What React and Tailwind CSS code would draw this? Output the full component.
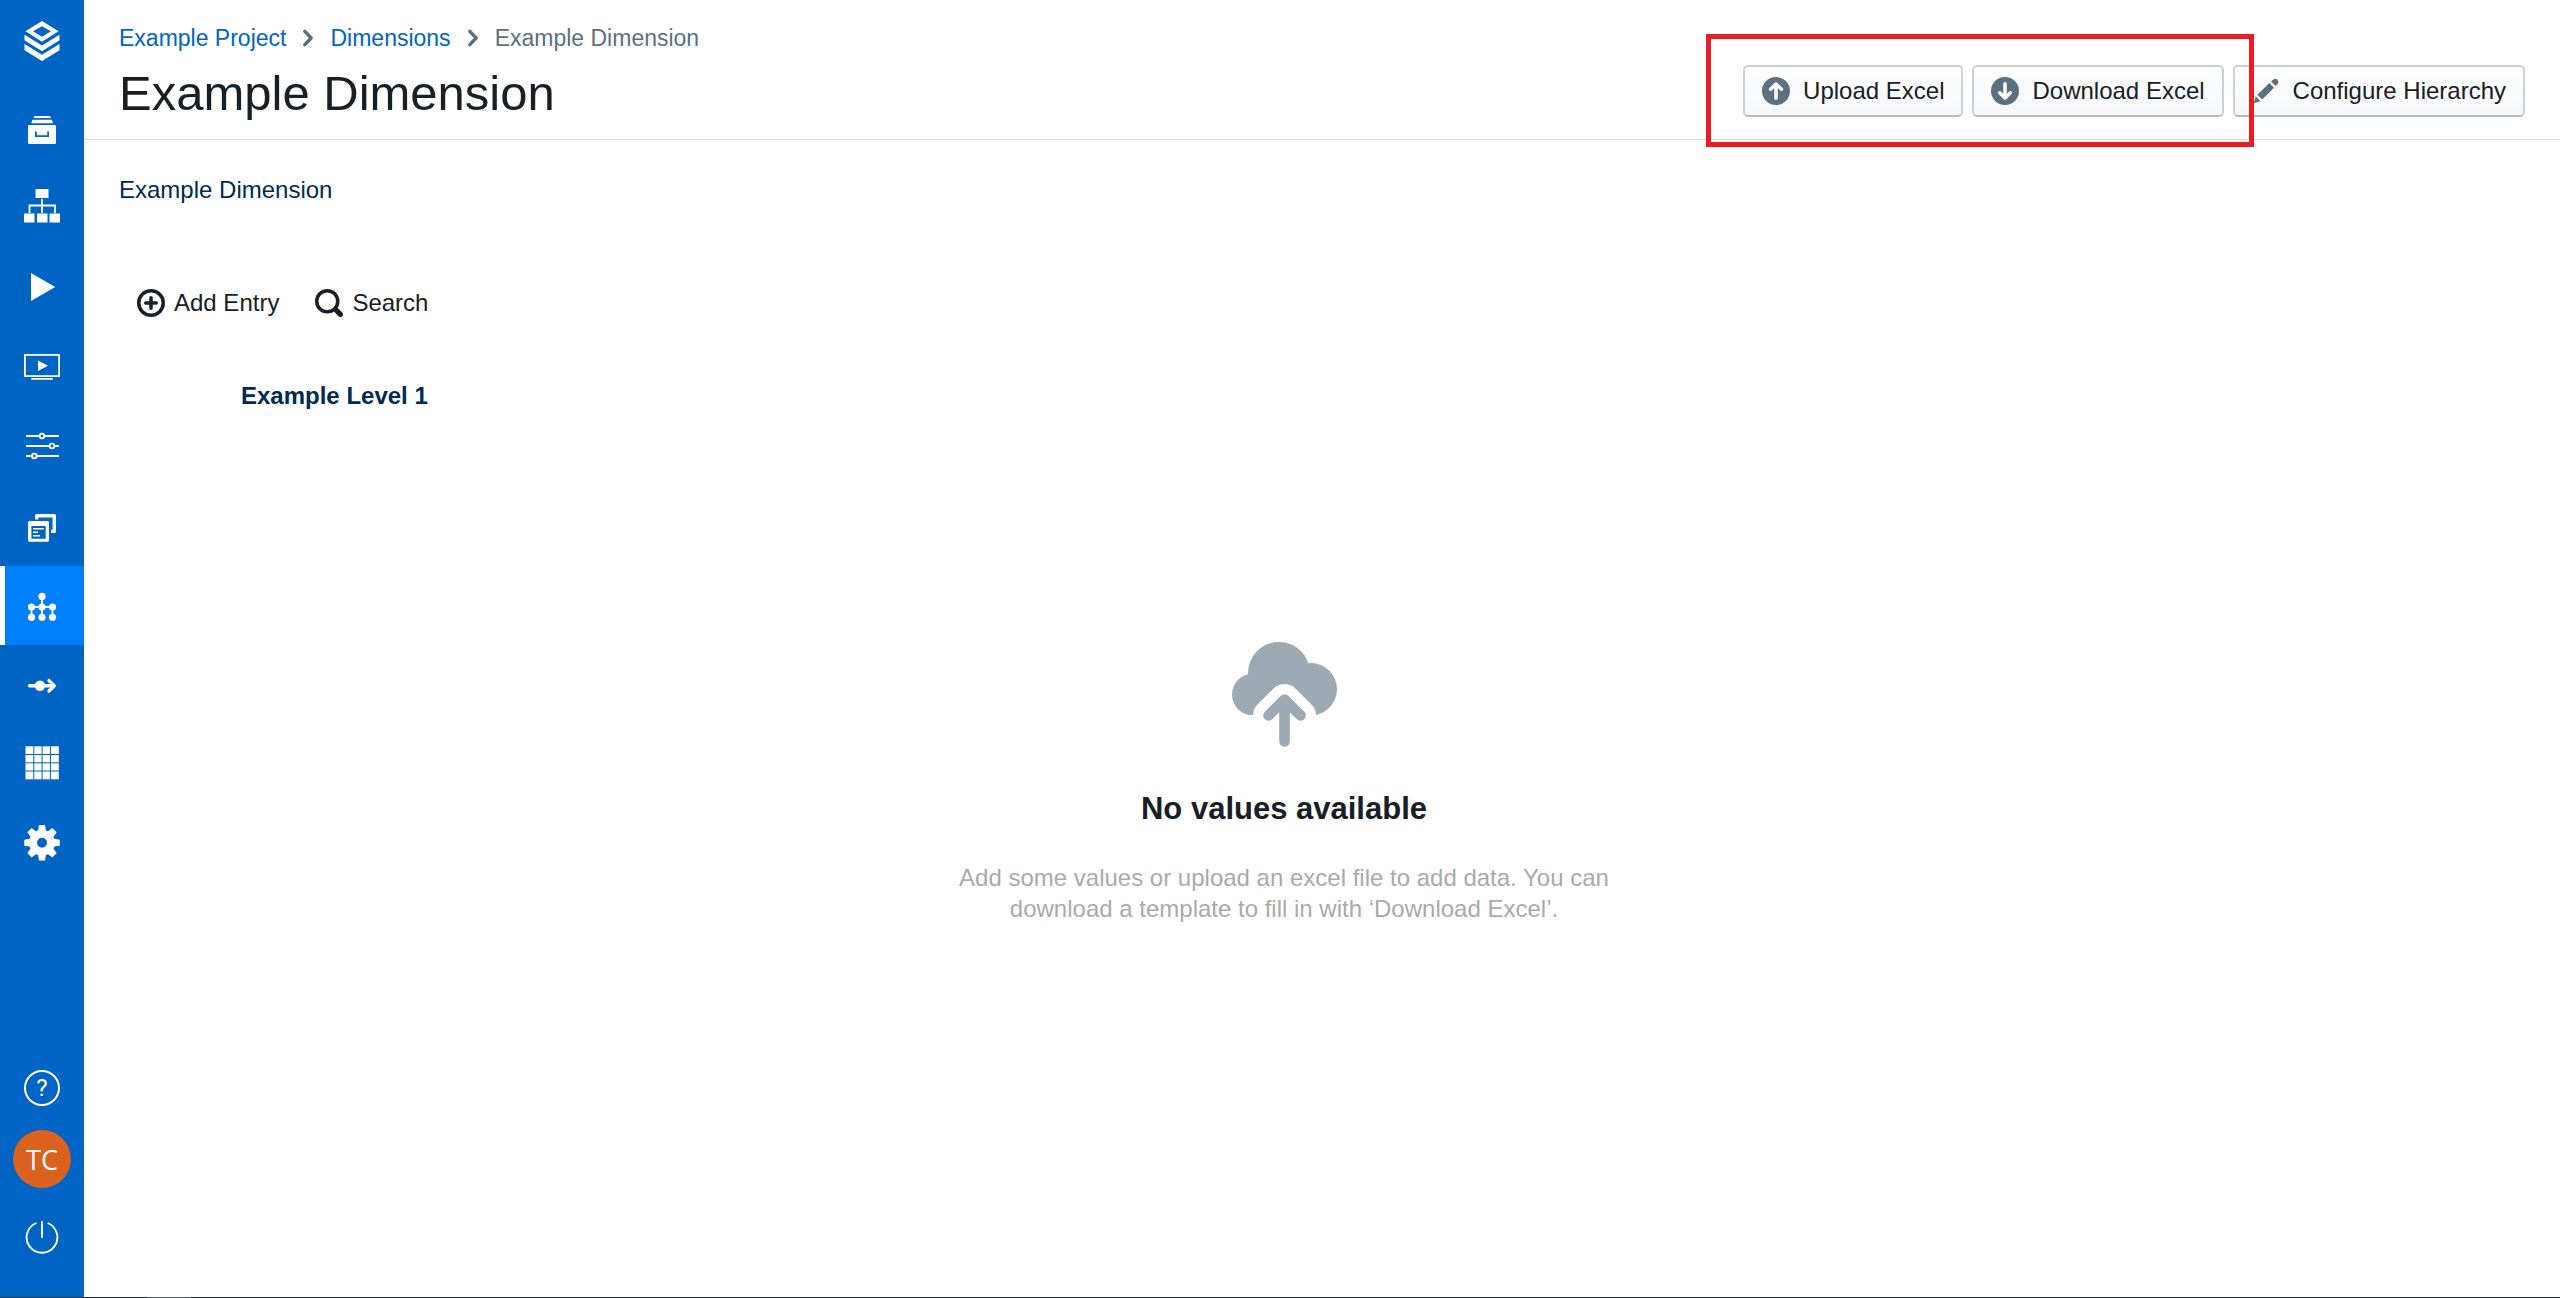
import React from "react";

const BLUE = "#0064c5";

const Logo = () => (
  <svg viewBox="0 0 36 40" className="h-10 w-9" fill="white" aria-hidden="true">
    <path fillRule="evenodd" d="M18 0L34.5 10.3L18 20.8L1.5 10.3ZM18 5.2L9 10.3L18 15.8L27 10.3Z" />
    <path d="M.5 13.8L18 24.6L35.5 13.8V19.2L18 30.2L.5 19.2Z" />
    <path d="M.5 23L18 33.8L35.5 23V29.2L18 40L.5 29.2Z" />
  </svg>
);

const NavSvg = ({ children }) => (
  <svg viewBox="0 0 40 45" className="h-[45px] w-10" fill="white" aria-hidden="true">
    {children}
  </svg>
);

const gearPath = (() => {
  const pts = [];
  for (let i = 0; i < 8; i++) {
    const a = (i * Math.PI) / 4;
    for (const [r, d] of [[13, -0.3], [18, -0.17], [18, 0.17], [13, 0.3]]) {
      pts.push(`${(20 + r * Math.sin(a + d)).toFixed(2)} ${(22.7 - r * Math.cos(a + d)).toFixed(2)}`);
    }
  }
  return `M${pts.join("L")}ZM20 17.7a5 5 0 1 0 0 10a5 5 0 1 0 0 -10Z`;
})();

const navItems = [
  {
    label: "Archive",
    icon: (
      <NavSvg>
        <path d="M12.5 7h15.5l1 2h-17.5zM10.3 10.7h19.6l1 3.5h-21.6z" />
        <rect x="6" y="16" width="28" height="19" rx="1.2" />
        <path d="M13.9 22.6V27.1H26.1V22.6" fill="none" stroke={BLUE} strokeWidth="1.8" />
      </NavSvg>
    ),
  },
  {
    label: "Structure",
    icon: (
      <NavSvg>
        <path d="M13.5 1h13v9h-13zM2 25.5h10.5v9H2zM15 25.5h10.5v9H15zM27.5 25.5H38v9H27.5z" />
        <path d="M20 11V25M7.5 25V17.5H33V25" fill="none" stroke="white" strokeWidth="1.8" />
      </NavSvg>
    ),
  },
  { label: "Run", icon: <NavSvg><path d="M9 6L33.2 20L9 34Z" /></NavSvg> },
  {
    label: "Presentation",
    icon: (
      <NavSvg>
        <rect x="2.9" y="8.9" width="34.2" height="21.2" fill="none" stroke="white" strokeWidth="1.8" />
        <path d="M16 14.6L26 19.8L16 25ZM9.3 32h21.5v1.8H9.3z" />
      </NavSvg>
    ),
  },
  {
    label: "Parameters",
    icon: (
      <NavSvg>
        <path d="M4 11H37M4 21H37M4 31H37" stroke="white" strokeWidth="1.8" />
        <g fill={BLUE} stroke="white" strokeWidth="1.8">
          <circle cx="20" cy="11" r="2.3" />
          <circle cx="30" cy="21" r="2.3" />
          <circle cx="12.3" cy="31" r="2.3" />
        </g>
      </NavSvg>
    ),
  },
  {
    label: "Views",
    icon: (
      <NavSvg>
        <path d="M14.7 15.5V11.7H32.3V27.4H29" fill="none" stroke="white" strokeWidth="3.4" strokeLinejoin="round" />
        <path fillRule="evenodd" d="M7.5 17H25.5Q27 17 27 18.5V36.2Q27 37.7 25.5 37.7H7.5Q6 37.7 6 36.2V18.5Q6 17 7.5 17ZM9.4 22V34.8H23.7V22Z" />
        <path d="M11 24.8H21.8M11 28.2H16M11 31.8H18" stroke="white" strokeWidth="1.6" />
      </NavSvg>
    ),
  },
  {
    label: "Dimensions",
    active: true,
    icon: (
      <NavSvg>
        <path d="M20 13V34M9.5 34V24H30.5V34" fill="none" stroke="white" strokeWidth="1.8" />
        {[[20, 13.4], [9.5, 24], [20, 24], [30.5, 24], [9.5, 34.3], [20, 34.3], [30.5, 34.3]].map(([x, y]) => (
          <circle key={`${x}-${y}`} cx={x} cy={y} r="3.6" />
        ))}
      </NavSvg>
    ),
  },
  {
    label: "Flow",
    icon: (
      <NavSvg>
        <circle cx="18" cy="23.8" r="5.2" />
        <path d="M7.5 23.8H32M27 18.6L32.3 23.8L27 29" fill="none" stroke="white" strokeWidth="3.4" strokeLinecap="round" strokeLinejoin="round" />
      </NavSvg>
    ),
  },
  {
    label: "Tables",
    icon: (
      <NavSvg>
        <rect x="3.5" y="5.3" width="33.3" height="33" />
        <path d="M11.8 5V39M20.1 5V39M28.4 5V39M3 13.5H37.2M3 21.8H37.2M3 30H37.2" stroke={BLUE} strokeWidth="1" />
      </NavSvg>
    ),
  },
  { label: "Settings", icon: <NavSvg><path fillRule="evenodd" d={gearPath} /></NavSvg> },
];

function Sidebar() {
  return (
    <aside className="flex w-[84px] shrink-0 flex-col bg-[#0064c5]">
      <a href="#home" aria-label="Home" className="flex h-[92px] items-start justify-center pt-[21px]">
        <Logo />
      </a>
      <nav aria-label="Main" className="flex flex-col">
        {navItems.map(({ label, icon, active }) => (
          <a
            key={label}
            href={`#${label.toLowerCase()}`}
            aria-label={label}
            aria-current={active ? "page" : undefined}
            className={`flex h-[79px] items-center justify-center ${
              active ? "border-l-[5px] border-white bg-[#007ffb] pr-[5px]" : ""
            }`}
          >
            {icon}
          </a>
        ))}
      </nav>
      <div className="mt-auto flex flex-col items-center gap-6 pb-[35px]">
        <button type="button" aria-label="Help" className="flex size-9 items-center justify-center rounded-full border-2 border-white font-['Roboto',sans-serif] text-2xl leading-none text-white">
          ?
        </button>
        <button type="button" aria-label="Account" className="flex size-[58px] items-center justify-center rounded-full bg-[#db611e] font-['Open_Sans',sans-serif] text-[27px] leading-none text-white">
          TC
        </button>
        <button type="button" aria-label="Log out" className="flex h-[50px] items-center">
          <svg viewBox="0 0 34 34" className="size-[34px]" fill="none" stroke="white" strokeWidth="1.8" aria-hidden="true">
            <path d="M11.4 3A15.4 15.4 0 1 0 22.6 3M17 1V18" />
          </svg>
        </button>
      </div>
    </aside>
  );
}

const Icon = ({ children }) => (
  <svg viewBox="0 0 16 16" className="size-7 shrink-0" fill="currentColor" aria-hidden="true">
    {children}
  </svg>
);

const Chevron = () => (
  <span className="text-[#5c7080]">
    <Icon>
      <path d="M6.2 4.2L9.8 8L6.2 11.8" fill="none" stroke="currentColor" strokeWidth="2" strokeLinecap="round" strokeLinejoin="round" />
    </Icon>
  </span>
);

const CircleArrow = ({ d }) => (
  <Icon>
    <circle cx="8" cy="8" r="8" />
    <path d={d} fill="none" stroke="white" strokeWidth="2" strokeLinecap="round" strokeLinejoin="round" />
  </Icon>
);

function ActionButton({ icon, children }) {
  return (
    <button
      type="button"
      className="flex h-[52px] items-center gap-[13px] rounded-[5px] border-2 border-[#ced0d2] border-b-[#b5b9bd] bg-linear-to-b from-white to-[#f5f7fa] px-[17px] text-2xl text-[#182026]"
    >
      <span className="text-[#5c7080]">{icon}</span>
      {children}
    </button>
  );
}

function Header() {
  return (
    <header className="flex h-[140px] items-start justify-between border-b border-[#dcdddd] px-[35px]">
      <div className="pt-6">
        <nav aria-label="Breadcrumb" className="flex h-7 items-center gap-2 text-[23px] leading-7">
          <a href="#project" className="text-[#0064c5]">Example Project</a>
          <Chevron />
          <a href="#dimensions" className="text-[#0064c5]">Dimensions</a>
          <Chevron />
          <span className="text-[#5c7080]">Example Dimension</span>
        </nav>
        <h1 className="mt-3 text-[49px] leading-[58px] text-[#182026]">Example Dimension</h1>
      </div>
      <div className="relative mt-[65px] flex gap-[9px]">
        <ActionButton icon={<CircleArrow d="M8 12.2V4M4.9 7L8 4L11.1 7" />}>Upload Excel</ActionButton>
        <ActionButton icon={<CircleArrow d="M8 3.8V12M4.9 9L8 12L11.1 9" />}>Download Excel</ActionButton>
        <ActionButton
          icon={
            <Icon>
              <path d="M2.2 11.2L4.8 13.8L1 15ZM3.1 10.2L9.9 3.4L12.6 6.1L5.8 12.9ZM10.9 2.6L12.2 1.4Q13.4 .6 14.6 1.6Q15.6 2.8 14.6 4L13.4 5.1Z" />
            </Icon>
          }
        >
          Configure Hierarchy
        </ActionButton>
        <div className="pointer-events-none absolute -top-[31px] right-[271px] -bottom-[30px] -left-[37px] border-[5px] border-[#ed1c24]" />
      </div>
    </header>
  );
}

function Toolbar() {
  return (
    <div className="mt-[72px] flex h-[52px] items-center gap-9 pl-[18px] text-2xl text-[#182026]">
      <button type="button" className="flex items-center gap-[9px]">
        <Icon>
          <circle cx="8" cy="8" r="7" fill="none" stroke="currentColor" strokeWidth="2" />
          <path d="M8 5V11M5 8H11" fill="none" stroke="currentColor" strokeWidth="2" strokeLinecap="round" />
        </Icon>
        Add Entry
      </button>
      <button type="button" className="flex items-center gap-[9px]">
        <Icon>
          <circle cx="7" cy="7" r="6" fill="none" stroke="currentColor" strokeWidth="2" />
          <path d="M11.8 11.8L14.5 14.5" stroke="currentColor" strokeWidth="3" strokeLinecap="round" />
        </Icon>
        Search
      </button>
    </div>
  );
}

const CloudUpload = () => (
  <svg viewBox="0 0 105 105" className="size-[105px]" fill="#9da9b3" aria-hidden="true">
    <mask id="cloud-cutout">
      <rect width="105" height="73.3" fill="white" />
      <path d="M36.5 73.5L52.5 57.5L68.5 73.5Z" fill="black" stroke="black" strokeWidth="31" strokeLinejoin="round" />
    </mask>
    <g mask="url(#cloud-cutout)">
      <circle cx="47" cy="31" r="31" />
      <circle cx="78.8" cy="47.2" r="26.2" />
      <circle cx="20.8" cy="52.5" r="20.8" />
      <path d="M20 40H80V73H20Z" />
    </g>
    <path d="M36.5 73.5L52.5 57.5L68.5 73.5M52.5 58V99.5" fill="none" stroke="#9da9b3" strokeWidth="10.6" strokeLinecap="round" strokeLinejoin="round" />
  </svg>
);

function EmptyState() {
  return (
    <section className="mt-[231px] flex flex-col items-center pr-[76px] text-center">
      <CloudUpload />
      <h2 className="mt-11 text-[31px] leading-9 font-bold text-[#182026]">No values available</h2>
      <p className="mt-[35px] max-w-[680px] text-2xl leading-[31px] text-[#aaaaaa]">
        Add some values or upload an excel file to add data. You can download a template to fill in with ‘Download Excel’.
      </p>
    </section>
  );
}

export default function App() {
  return (
    <div className="flex min-h-screen flex-col bg-white font-['Liberation_Sans',Arial,sans-serif]">
      <div className="flex grow">
        <Sidebar />
        <div className="flex min-w-0 grow flex-col">
          <Header />
          <main className="px-[35px] pt-[35px]">
            <p className="text-2xl leading-[30px] text-[#002b50]">Example Dimension</p>
            <Toolbar />
            <h3 className="mt-[52px] pl-[122px] text-2xl leading-[30px] font-bold text-[#002b50]">Example Level 1</h3>
            <EmptyState />
          </main>
        </div>
      </div>
      <footer className="h-px bg-[#24323f] pl-[147px]">
        <div className="h-px w-11 bg-[#56656b]" />
      </footer>
    </div>
  );
}
